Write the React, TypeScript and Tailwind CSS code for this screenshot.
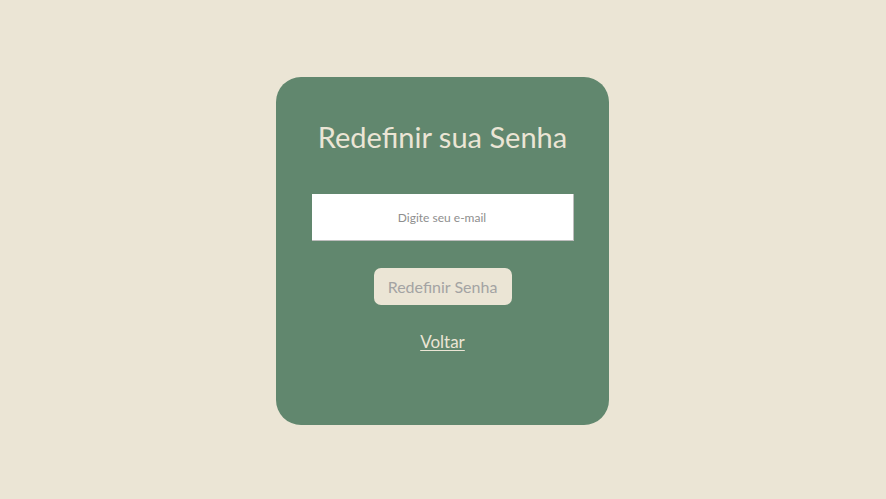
export default function App() {
  return (
    <div
      className="flex min-h-[499px] w-full items-center justify-center bg-[#ebe5d5]"
      style={{ fontFamily: "Lato, 'Noto Sans', sans-serif" }}
    >
      <div className="mr-[1px] mt-[3px] flex h-[348px] w-[333px] flex-col items-center rounded-[25px] bg-[#61876e] pt-[42px]">
        <h1 className="text-[29px] font-normal leading-[36px] text-[#ebe5d5]">
          Redefinir sua Senha
        </h1>
        <input
          type="email"
          placeholder="Digite seu e-mail"
          className="mt-[39px] h-[47px] w-[262px] border-b border-r border-[#bdbdbd] bg-white text-center text-[12px] text-gray-700 outline-none placeholder:text-[#8e8e8e]"
        />
        <button className="mt-[27px] h-[37px] w-[138px] rounded-[7px] bg-[#ebe5d5] text-[16px] text-[#a3a3a3]">
          Redefinir Senha
        </button>
        <a href="#" className="mt-[24px] text-[17px] text-[#ebe5d5] underline underline-offset-2">
          Voltar
        </a>
      </div>
    </div>
  );
}
